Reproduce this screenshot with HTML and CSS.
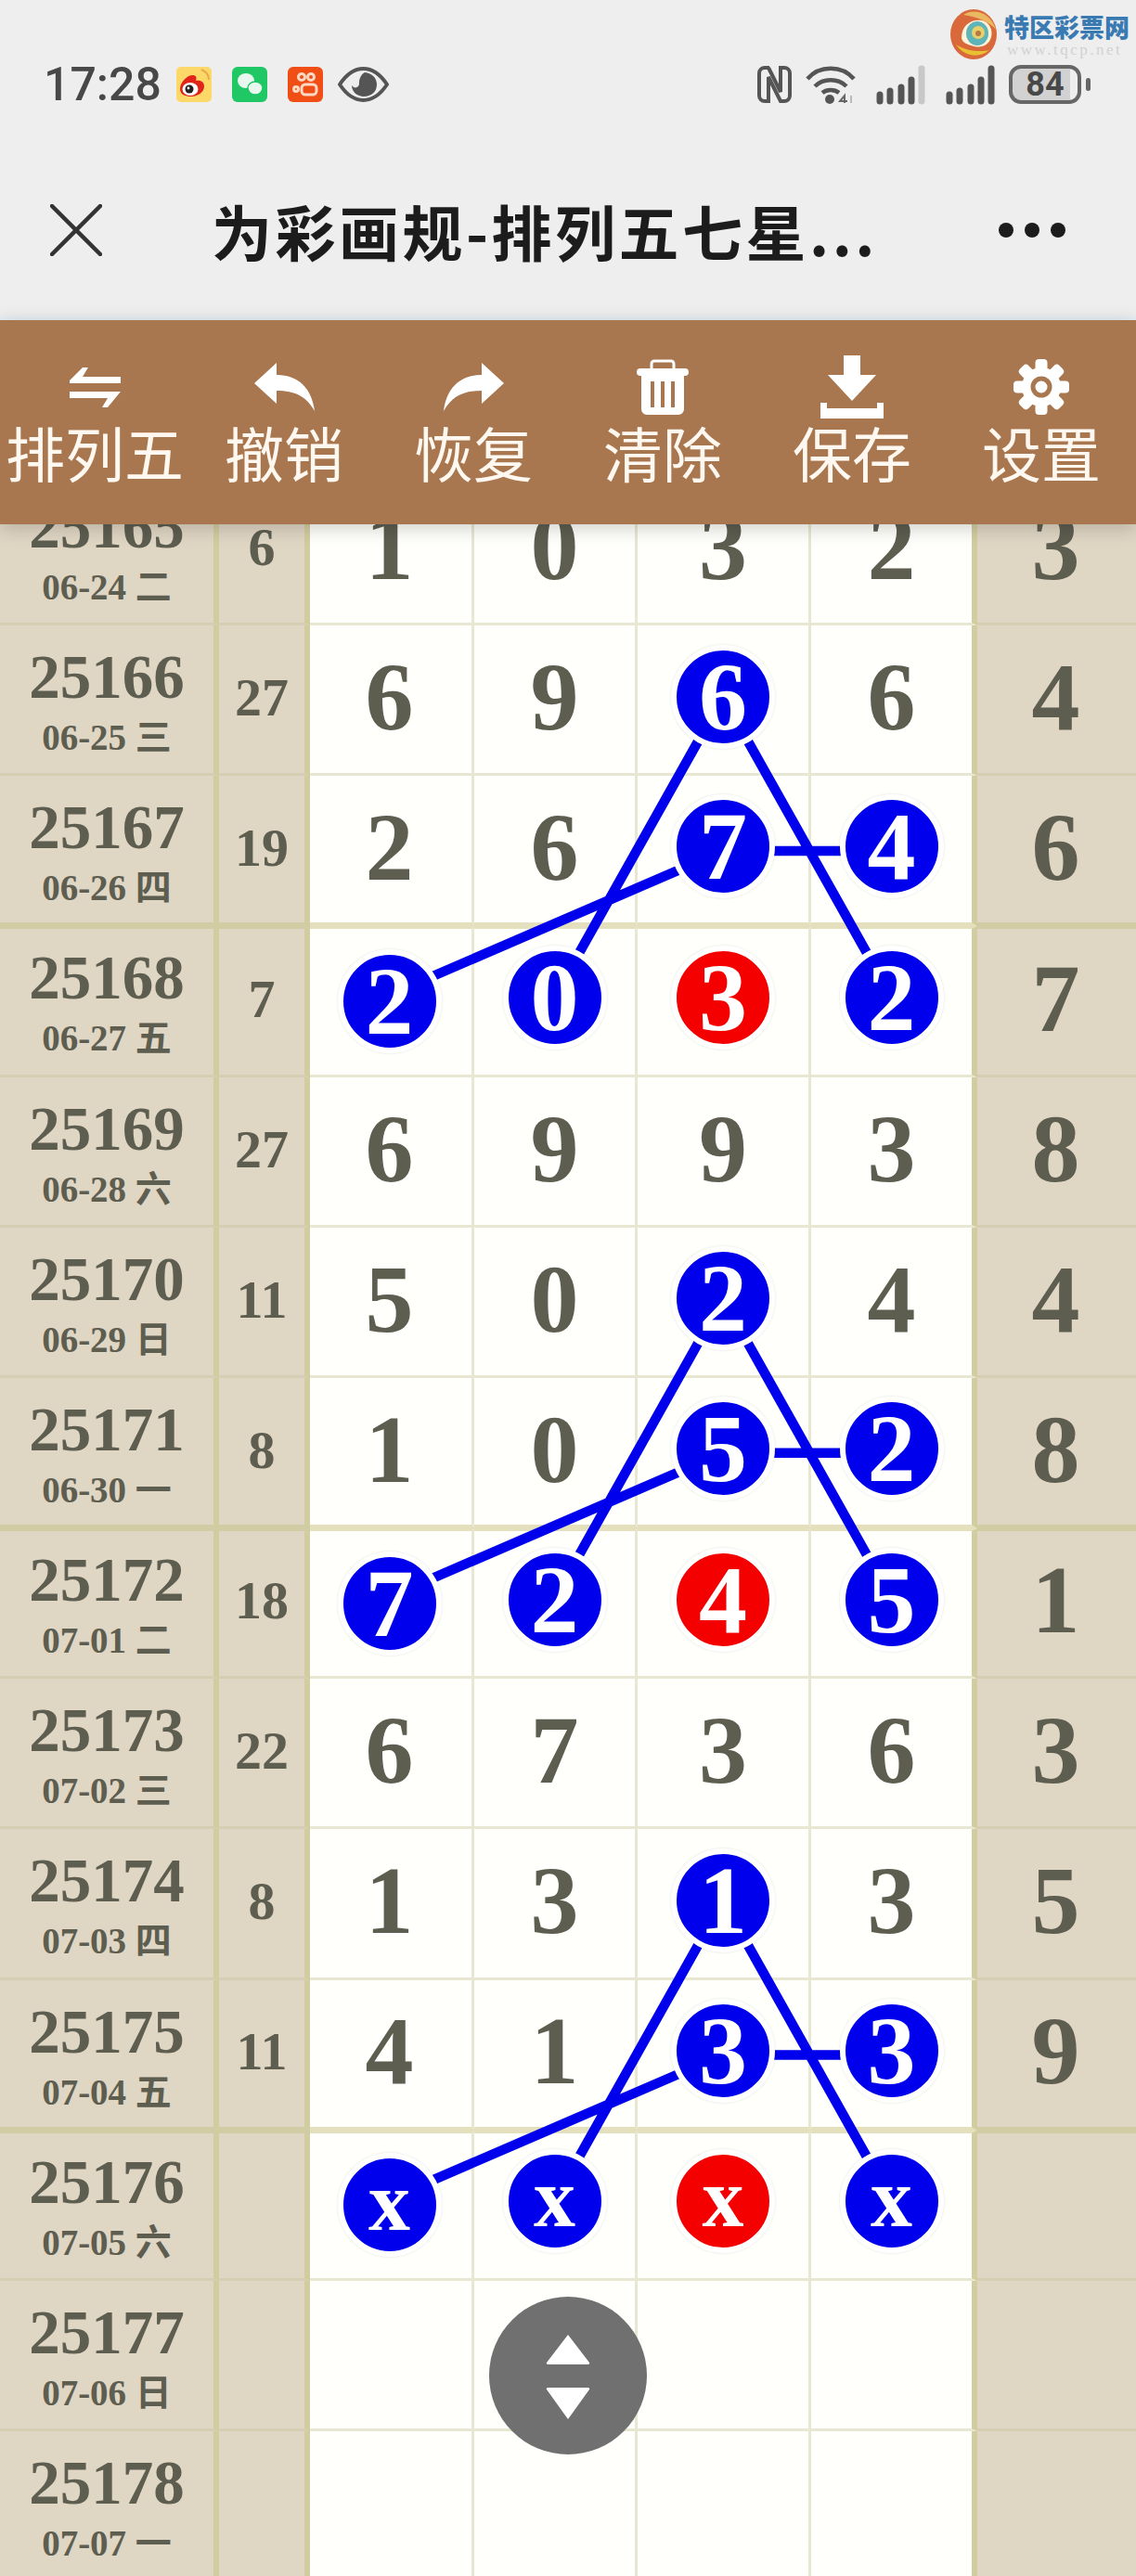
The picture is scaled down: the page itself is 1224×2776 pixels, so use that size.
FILE: index.html
```html
<!DOCTYPE html>
<html lang="zh-CN">
<head>
  <meta charset="UTF-8">
  <meta name="viewport" content="width=device-width, initial-scale=1.0">
  <title>为彩画规-排列五七星</title>
  <link rel="stylesheet" href="styles.css">
</head>
<body>
<div class="page">
  <header class="topbar">
    <div class="status">
      <span class="time">17:28</span>
      <svg class="app-icon" viewBox="0 0 38 38">
        <rect width="38" height="38" rx="5" fill="#fcd868"/>
        <path d="M27 3c5 2 8 6 8 11" fill="none" stroke="#e8a94a" stroke-width="2"/>
        <path d="M4 24c0-7 7-15 14-15 4 0 4 4 3 6 5-1 9 1 9 6 0 7-8 11-14 11S4 30 4 24z" fill="#e2231a"/>
        <ellipse cx="15" cy="24" rx="8.5" ry="7" fill="#fff"/>
        <circle cx="14" cy="24" r="4.5" fill="#222"/>
        <circle cx="13" cy="23" r="1.4" fill="#fff"/>
      </svg>
      <svg class="app-icon" viewBox="0 0 38 38">
        <rect width="38" height="38" rx="6" fill="#1fc765"/>
        <ellipse cx="15" cy="15" rx="9" ry="8" fill="#e8f8ee"/>
        <ellipse cx="25" cy="23" rx="8" ry="7" fill="#e8f8ee" stroke="#1fc765" stroke-width="1.5"/>
      </svg>
      <svg class="app-icon" viewBox="0 0 38 38">
        <rect width="38" height="38" rx="6" fill="#f04e14"/>
        <g fill="none" stroke="#ffd9c4" stroke-width="3">
          <circle cx="15" cy="11" r="3.5"/>
          <circle cx="25" cy="11" r="3.5"/>
          <circle cx="9" cy="24" r="2.5"/>
          <rect x="15" y="19" width="16" height="11" rx="4"/>
        </g>
      </svg>
      <svg class="eye-icon" viewBox="0 0 55 38">
        <path d="M2 19C10 7 18 2 27.500 2S45 7 53 19C45 31 37 36 27.500 36S10 31 2 19z" fill="none" stroke="#555" stroke-width="4"/>
        <path d="M29 6c8 1 13 6 13 13 0 8-6 13-14 13-7 0-13-5-13-12 2 3 5 3 7 1 2-3 0-5 2-9 1-3 3-5 5-6z" fill="#555"/>
      </svg>
      <div class="status-right">
        <svg class="nfc-icon" viewBox="0 0 37 40">
          <path d="M13 2H8a6 6 0 0 0-6 6v24a6 6 0 0 0 6 6h4V12l13 26h4a6 6 0 0 0 6-6V8a6 6 0 0 0-6-6h-4v26L12 2" fill="none" stroke="#555" stroke-width="4"/>
        </svg>
        <svg class="wifi-icon" viewBox="0 0 54 42">
          <g fill="none" stroke="#555" stroke-width="4.500">
            <path d="M2 15C15 0 39 0 52 15"/>
            <path d="M10 23c9-9 25-9 34 0"/>
            <path d="M18 30c5-4 13-4 18 0"/>
          </g>
          <circle cx="26" cy="37" r="5" fill="#555"/>
          <path d="M42 41v-8l-5 6h8" fill="none" stroke="#666" stroke-width="2"/>
          <path d="M49 33v8" stroke="#bbb" stroke-width="2"/>
        </svg>
        <svg class="signal-icon" viewBox="0 0 60 43">
          <g fill="none" stroke-width="7" stroke-linecap="round" stroke="#555">
            <path d="M11 32v7M22 28v11M34 24v15M45 16v23"/>
            <path d="M56 4v35" stroke="#c8c8c8"/>
          </g>
        </svg>
        <svg class="signal-icon" viewBox="0 0 60 43">
          <g fill="none" stroke-width="7" stroke-linecap="round" stroke="#555">
            <path d="M11 32v7M22 28v11M34 24v15M45 16v23M56 4v35"/>
          </g>
        </svg>
        <div class="battery"><span class="battery-level">84</span></div>
        <span class="battery-tip"></span>
      </div>
    </div>
    <div class="titlebar">
      <svg class="close-icon" viewBox="0 0 56 56">
        <path d="M2 2l52 52M54 2L2 54" fill="none" stroke="#333" stroke-width="4.500" stroke-linecap="round"/>
      </svg>
      <h1 class="title">为彩画规-排列五七星...</h1>
      <div class="more"><i></i><i></i><i></i></div>
    </div>
  </header>

  <div class="watermark">
    <svg class="wm-logo" viewBox="0 0 50 54">
      <ellipse cx="25" cy="27" rx="25" ry="27" fill="#d9683a"/>
      <path d="M6 38c8 12 24 16 36 6-8 2-24 2-36-6z" fill="#e8c030"/>
      <path d="M14 6c12-8 30-2 35 16-6-8-20-14-35-16z" fill="#eab860"/>
      <path d="M12 30c0-12 10-20 22-18 8 2 12 10 10 18-2 8-10 12-18 10-8-2-14-4-14-10z" fill="#fff2d8"/>
      <ellipse cx="29" cy="26" rx="12" ry="13" fill="#5fb4b8"/>
      <circle cx="30" cy="25" r="7" fill="#e8d068"/>
      <circle cx="30" cy="26" r="3" fill="#b77848"/>
    </svg>
    <div>
      <div class="wm-name">特区彩票网</div>
      <div class="wm-url">www.tqcp.net</div>
    </div>
  </div>

  <nav class="toolbar">
    <div class="tool">
      <div class="tool-icon">
        <svg width="55" height="43" viewBox="0 0 55 43"><path d="M0 14L14 0h6l-6 10h41v7H0zM0 26h55L41 43h-6l6-10H0z"/></svg>
      </div>
      <span class="tool-label">排列五</span>
    </div>
    <div class="tool">
      <div class="tool-icon">
        <svg width="65" height="52" viewBox="0 0 65 52"><path d="M0 22L24 0v13c24 0 38 15 41 39-9-16-21-22-41-22v14z"/></svg>
      </div>
      <span class="tool-label">撤销</span>
    </div>
    <div class="tool">
      <div class="tool-icon">
        <svg width="65" height="52" viewBox="0 0 65 52"><path d="M65 22L41 0v13C17 13 3 28 0 52c9-16 21-22 41-22v14z"/></svg>
      </div>
      <span class="tool-label">恢复</span>
    </div>
    <div class="tool">
      <div class="tool-icon">
        <svg width="56" height="60" viewBox="0 0 56 60">
          <path d="M16 11V5a3 3 0 0 1 3-3h18a3 3 0 0 1 3 3v6" fill="none" stroke="#fff" stroke-width="3"/>
          <rect y="10" width="56" height="8" rx="4"/>
          <path fill-rule="evenodd" d="M5 18h46v36a6 6 0 0 1-6 6H11a6 6 0 0 1-6-6zM15 24v28h4V24zM26 24v28h4V24zM37 24v28h4V24z"/>
        </svg>
      </div>
      <span class="tool-label">清除</span>
    </div>
    <div class="tool">
      <div class="tool-icon">
        <svg width="68" height="68" viewBox="0 0 68 68"><path d="M25 0h18v21h17L34 49 8 21h17zM0 51h7v6h54v-6h7v17H0z"/></svg>
      </div>
      <span class="tool-label">保存</span>
    </div>
    <div class="tool">
      <div class="tool-icon">
        <svg width="60" height="60" viewBox="-30 -30 60 60">
          <circle r="21"/>
          <g>
            <rect x="-6.500" y="-30" width="13" height="60" rx="4"/>
            <rect x="-6.500" y="-30" width="13" height="60" rx="4" transform="rotate(45)"/>
            <rect x="-6.500" y="-30" width="13" height="60" rx="4" transform="rotate(90)"/>
            <rect x="-6.500" y="-30" width="13" height="60" rx="4" transform="rotate(135)"/>
          </g>
          <circle r="9" fill="#fff" stroke="#a8774f" stroke-width="5"/>
        </svg>
      </div>
      <span class="tool-label">设置</span>
    </div>
  </nav>

  <main class="board">
    <svg class="links" viewBox="0 0 1224 2270" width="1224" height="2270">
      <defs>
        <g id="link-set">
          <path d="M779 240L597 564M779 240L961 564M779 406L420 561M779 406H961" fill="none" stroke="#0000ec" stroke-width="10.500"/>
        </g>
      </defs>
      <use href="#link-set"/>
      <use href="#link-set" y="648.700"/>
      <use href="#link-set" y="1297.400"/>
    </svg>

    <div class="row">
      <div class="issue"><b>25165</b><span>06-24 二</span></div>
      <div class="sum">6</div>
      <div class="num">1</div><div class="num">0</div><div class="num">3</div><div class="num">2</div>
      <div class="num side">3</div>
    </div>
    <div class="row">
      <div class="issue"><b>25166</b><span>06-25 三</span></div>
      <div class="sum">27</div>
      <div class="num">6</div><div class="num">9</div><div class="num"><span class="ball">6</span></div><div class="num">6</div>
      <div class="num side">4</div>
    </div>
    <div class="row row-end">
      <div class="issue"><b>25167</b><span>06-26 四</span></div>
      <div class="sum">19</div>
      <div class="num">2</div><div class="num">6</div><div class="num"><span class="ball">7</span></div><div class="num"><span class="ball">4</span></div>
      <div class="num side">6</div>
    </div>
    <div class="row">
      <div class="issue"><b>25168</b><span>06-27 五</span></div>
      <div class="sum">7</div>
      <div class="num"><span class="ball ball-low">2</span></div><div class="num"><span class="ball">0</span></div><div class="num"><span class="ball ball-red">3</span></div><div class="num"><span class="ball">2</span></div>
      <div class="num side">7</div>
    </div>
    <div class="row">
      <div class="issue"><b>25169</b><span>06-28 六</span></div>
      <div class="sum">27</div>
      <div class="num">6</div><div class="num">9</div><div class="num">9</div><div class="num">3</div>
      <div class="num side">8</div>
    </div>
    <div class="row">
      <div class="issue"><b>25170</b><span>06-29 日</span></div>
      <div class="sum">11</div>
      <div class="num">5</div><div class="num">0</div><div class="num"><span class="ball">2</span></div><div class="num">4</div>
      <div class="num side">4</div>
    </div>
    <div class="row row-end">
      <div class="issue"><b>25171</b><span>06-30 一</span></div>
      <div class="sum">8</div>
      <div class="num">1</div><div class="num">0</div><div class="num"><span class="ball">5</span></div><div class="num"><span class="ball">2</span></div>
      <div class="num side">8</div>
    </div>
    <div class="row">
      <div class="issue"><b>25172</b><span>07-01 二</span></div>
      <div class="sum">18</div>
      <div class="num"><span class="ball ball-low">7</span></div><div class="num"><span class="ball">2</span></div><div class="num"><span class="ball ball-red">4</span></div><div class="num"><span class="ball">5</span></div>
      <div class="num side">1</div>
    </div>
    <div class="row">
      <div class="issue"><b>25173</b><span>07-02 三</span></div>
      <div class="sum">22</div>
      <div class="num">6</div><div class="num">7</div><div class="num">3</div><div class="num">6</div>
      <div class="num side">3</div>
    </div>
    <div class="row">
      <div class="issue"><b>25174</b><span>07-03 四</span></div>
      <div class="sum">8</div>
      <div class="num">1</div><div class="num">3</div><div class="num"><span class="ball">1</span></div><div class="num">3</div>
      <div class="num side">5</div>
    </div>
    <div class="row row-end">
      <div class="issue"><b>25175</b><span>07-04 五</span></div>
      <div class="sum">11</div>
      <div class="num">4</div><div class="num">1</div><div class="num"><span class="ball">3</span></div><div class="num"><span class="ball">3</span></div>
      <div class="num side">9</div>
    </div>
    <div class="row">
      <div class="issue"><b>25176</b><span>07-05 六</span></div>
      <div class="sum"></div>
      <div class="num"><span class="ball ball-low ball-x">x</span></div><div class="num"><span class="ball ball-x">x</span></div><div class="num"><span class="ball ball-red ball-x">x</span></div><div class="num"><span class="ball ball-x">x</span></div>
      <div class="num side"></div>
    </div>
    <div class="row">
      <div class="issue"><b>25177</b><span>07-06 日</span></div>
      <div class="sum"></div>
      <div class="num"></div><div class="num"></div><div class="num"></div><div class="num"></div>
      <div class="num side"></div>
    </div>
    <div class="row">
      <div class="issue"><b>25178</b><span>07-07 一</span></div>
      <div class="sum"></div>
      <div class="num"></div><div class="num"></div><div class="num"></div><div class="num"></div>
      <div class="num side"></div>
    </div>
  </main>

  <button class="scroll-btn" type="button">
    <svg width="50" height="93" viewBox="0 0 50 93">
      <path d="M25 2L48 32a1.500 1.500 0 0 1-1 2H3a1.500 1.500 0 0 1-1-2zM25 93L48 61a1.500 1.500 0 0 0-1-2H3a1.500 1.500 0 0 0-1 2z" fill="#fff"/>
    </svg>
  </button>
</div>
</body>
</html>
```

FILE: styles.css
```css
body {
  margin: 0;
  background: #fff;
}
.page {
  position: relative;
  width: 1224px;
  height: 2776px;
  overflow: hidden;
  font-family: "Noto Sans CJK SC", "Noto Sans", sans-serif;
}

/* status bar and title */
.topbar {
  height: 340px;
  background-color: #eeeeee;
  border-bottom: 5px solid #e8f0f4;
}
.status {
  display: flex;
  align-items: center;
  gap: 22px;
  height: 42px;
  padding: 70px 49px 0 47px;
}
.time {
  width: 121px;
  font-family: Roboto, sans-serif;
  font-size: 50px;
  font-weight: 500;
  color: #484848;
}
.app-icon {
  width: 38px;
  height: 38px;
}
.eye-icon {
  width: 55px;
  height: 38px;
  margin-left: -6px;
}
.status-right {
  display: flex;
  align-items: center;
  gap: 15px;
  margin-left: auto;
}
.nfc-icon {
  width: 37px;
  height: 40px;
}
.wifi-icon {
  width: 54px;
  height: 42px;
}
.signal-icon {
  width: 60px;
  height: 43px;
}
.battery {
  width: 78px;
  height: 42px;
  box-sizing: border-box;
  border: 4px solid #666;
  border-radius: 13px;
  margin-right: -10px;
  background: linear-gradient(90deg, #d2d2d2 88%, #eee 88%);
  display: flex;
  align-items: center;
  justify-content: center;
}
.battery-level {
  font-family: Roboto, sans-serif;
  font-size: 36px;
  font-weight: 700;
  color: #484848;
}
.battery-tip {
  width: 5px;
  height: 14px;
  border-radius: 3px;
  background-color: #666;
}
.titlebar {
  display: flex;
  align-items: center;
  height: 136px;
  padding: 0 0 0 54px;
  margin-top: 68px;
}
.close-icon {
  width: 56px;
  height: 56px;
  flex-shrink: 0;
}
.title {
  margin: 0 0 0 118px;
  font-size: 65px;
  font-weight: 700;
  letter-spacing: 3.500px;
  white-space: nowrap;
  color: #1c1c1c;
}
.more {
  display: flex;
  gap: 12px;
  margin-left: auto;
  padding-right: 76px;
}
.more i {
  width: 16px;
  height: 16px;
  border-radius: 50%;
  background-color: #1c1c1c;
}

/* watermark of the site, sits on top of the status bar */
.watermark {
  position: absolute;
  top: 10px;
  left: 1024px;
  display: flex;
  gap: 8px;
}
.wm-logo {
  width: 50px;
  height: 54px;
}
.wm-name {
  margin-top: 2px;
  font-size: 27px;
  line-height: 34px;
  font-weight: 900;
  color: #3a7ab2;
}
.wm-url {
  font-family: "Liberation Serif", serif;
  font-size: 17px;
  line-height: 16px;
  letter-spacing: 2.500px;
  padding-left: 3px;
  color: #d2d2d2;
}

/* toolbar */
.toolbar {
  position: relative;
  z-index: 5;
  display: flex;
  height: 220px;
  box-sizing: border-box;
  padding-top: 39px;
  background-color: #a8774f;
  box-shadow: 0 4px 20px rgba(0,0,0,0.2);
}
.tool {
  flex: 1;
  display: flex;
  flex-direction: column;
  align-items: center;
}
.tool-icon {
  display: flex;
  align-items: center;
  justify-content: center;
  height: 66px;
}
.tool-icon svg {
  fill: #fff;
}
.tool-label {
  margin-top: 3px;
  font-size: 64px;
  line-height: 66px;
  color: #fff8f0;
  white-space: nowrap;
}

/* table */
.board {
  position: relative;
  margin-top: -53px;
  font-family: "Liberation Serif", serif;
  color: #5d5d50;
}
.links {
  position: absolute;
  top: -1px;
  left: 0;
  z-index: 1;
}
.row {
  display: grid;
  grid-template-columns: 236px 98px 177px 176px 187px 179px 171px;
  height: 162.170px;
}
.issue {
  display: flex;
  flex-direction: column;
  align-items: center;
  background-color: #e0d6c4;
  border-right: 6px solid #d2cda0;
  border-bottom: 3px solid #d6cdb2;
  padding-top: 19px;
}
.issue b {
  font-size: 67px;
  line-height: 72px;
  font-weight: 700;
}
.issue span {
  margin-top: 8px;
  font-size: 39px;
  line-height: 44px;
  font-weight: 700;
  white-space: nowrap;
  font-family: "Liberation Serif", "Noto Sans CJK SC", serif;
}
.sum {
  display: flex;
  align-items: center;
  justify-content: center;
  background-color: #e0d6c4;
  border-right: 6px solid #d2cda0;
  border-bottom: 3px solid #d6cdb2;
  padding-bottom: 4px;
  font-size: 58px;
  font-weight: 700;
}
.num {
  display: flex;
  align-items: center;
  justify-content: center;
  background-color: #fffffb;
  border-right: 3px solid #e8e8d2;
  border-bottom: 3px solid #e8e8d2;
  padding-bottom: 6px;
  font-size: 104px;
  font-weight: 700;
}
.num:nth-child(3) {
  padding-right: 3px;
}
.num:nth-child(6) {
  border-right: 6px solid #d2cda0;
}
.side {
  background-color: #e0d6c4;
  border-right: 0;
  border-bottom-color: #d6cdb2;
  padding-right: 2px;
}

.row-end .issue,
.row-end .sum,
.row-end .side {
  border-bottom: 4px solid #d2cca4;
}
.row-end .num:not(.side) {
  border-bottom: 4px solid #e4dfbc;
}
.row-end + .row .issue,
.row-end + .row .sum,
.row-end + .row .side {
  border-top: 3px solid #d2cca4;
}
.row-end + .row .num:not(.side) {
  border-top: 3px solid #e4dfbc;
}
.row-end + .row .issue {
  padding-top: 16px;
}
.row-end + .row .sum {
  padding-bottom: 7px;
}
.row-end + .row .num {
  padding-bottom: 9px;
}

.ball {
  position: relative;
  z-index: 2;
  display: flex;
  align-items: center;
  justify-content: center;
  width: 100px;
  height: 100px;
  border: 6px solid #fff;
  border-radius: 50%;
  background-color: #0000ec;
  box-shadow: 0 0 3px rgba(0,0,0,0.12);
  color: #fff;
  line-height: 1;
}
.ball-red {
  background-color: #f50000;
}
.ball-low {
  margin-top: 8px;
}
.ball-x {
  height: 94px;
  padding-bottom: 6px;
  font-size: 90px;
}

/* floating up/down button */
.scroll-btn {
  position: absolute;
  left: 527px;
  top: 2475px;
  z-index: 4;
  width: 170px;
  height: 170px;
  padding: 0;
  border: none;
  border-radius: 50%;
  background-color: #707070;
  display: flex;
  align-items: center;
  justify-content: center;
}
```
